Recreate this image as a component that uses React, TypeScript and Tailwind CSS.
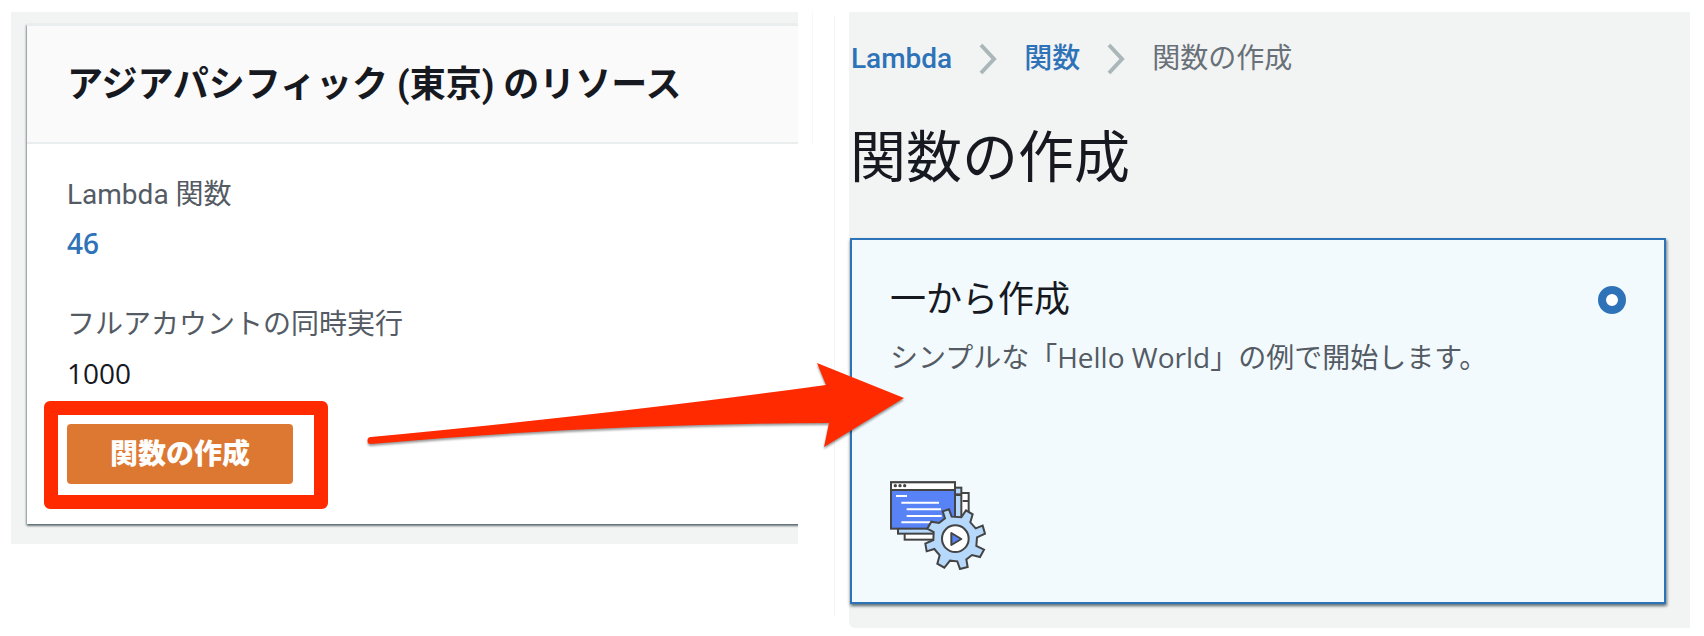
import { useState } from 'react'

const fields = [
  { label: 'Lambda 関数', value: '46', link: true },
  { label: 'フルアカウントの同時実行', value: '1000', link: false },
]

const crumbs = [
  { text: 'Lambda', link: true },
  { text: '関数', link: true },
  { text: '関数の作成', link: false },
]

const Chevron = () => (
  <svg viewBox="0 0 18 32" className="h-8 w-[18px] shrink-0" fill="none" stroke="#aab7b8" strokeWidth="4" aria-hidden="true">
    <path d="M2 2 L15 16 L2 30" />
  </svg>
)

const ScratchIcon = () => (
  <svg viewBox="60 64 291 267" className="h-[89px] w-[97px]" stroke="#444" strokeWidth="6" aria-hidden="true">
    {/* stacked windows */}
    <rect x="104" y="100" width="192" height="140" fill="#fff" />
    <path d="M278 124 H296" />
    <rect x="84" y="84" width="190" height="138" fill="#b5d8fb" />
    <path d="M258 105 H274" strokeWidth="8" />
    <rect x="63" y="68" width="192" height="139" fill="#5783f6" />
    <rect x="63" y="68" width="192" height="23" fill="#fff" />
    <g fill="#444" stroke="none">
      <circle cx="76" cy="78" r="5" />
      <circle cx="90" cy="78" r="5" />
      <circle cx="104" cy="78" r="5" />
    </g>
    <path d="M78 109 H111 M94 129 H207 M110 149 H213 M110 169 H215 M94 188 H190" stroke="#fff" strokeWidth="6" />
    {/* gear */}
    <path
      d="M218 155 L237 149 L245 171 L274 173 L288 152 L308 164 L301 188 L317 206 L338 198 L345 222 L321 233 L319 259 L342 270 L330 292 L306 286 L289 299 L293 322 L270 328 L262 305 L240 303 L223 324 L202 312 L209 287 L193 268 L170 275 L166 252 L190 241 L191 217 L172 207 L184 186 L207 190 L225 176 Z"
      fill="#b5d8fb"
    />
    <circle cx="256" cy="237" r="40" fill="#fff" />
    <path d="M244 220 V256 L274 238 Z" fill="#5783f6" strokeLinejoin="round" />
  </svg>
)

const Arrow = () => (
  <svg
    viewBox="0 0 544 92"
    className="pointer-events-none absolute top-[360px] left-[364px] h-[92px] w-[544px] drop-shadow-[0_2px_1px_rgba(0,0,0,0.4)]"
    aria-hidden="true"
  >
    <path
      d="M7 77 Q260 53 462 25 L453 3 L540 38 L460 87 L465 63 Q230 64 7 84 A3.5 3.5 0 0 1 7 77 Z"
      fill="#ff2a00"
    />
  </svg>
)

const ResourceCard = () => (
  <section className="overflow-hidden bg-[#f2f3f3] pt-3 pb-5 pl-4">
    <div className="-mr-4 border-t-2 border-[#eaeded] bg-white shadow-[0_2px_2px_rgba(0,28,36,0.5),-1px_1px_2px_rgba(0,28,36,0.3)]">
      <header className="border-b-2 border-[#eaeded] bg-[#fafafa] px-10 pt-[33px] pb-[31px]">
        <h2 className="text-4xl leading-[52px] font-bold whitespace-nowrap text-[#16191f]">アジアパシフィック (東京) のリソース</h2>
      </header>

      <div className="px-10 pt-[29px] pb-10">
        <dl className="flex flex-col gap-[38px]">
          {fields.map((field) => (
            <div key={field.label} className="flex flex-col gap-1">
              <dt className="text-[#545b64]">{field.label}</dt>
              <dd className="font-['Open_Sans'] font-medium text-[#16191f]">
                {field.link ? <a href="#functions" className="font-semibold text-[#2e73b8]">{field.value}</a> : field.value}
              </dd>
            </div>
          ))}
        </dl>

        <div className="relative mt-[29px] w-fit">
          <button className="block h-[60px] w-[226px] rounded bg-[#dd7833] pt-[2px] font-black text-white">関数の作成</button>
          <div className="pointer-events-none absolute -top-[23px] -right-[35px] -bottom-[25px] -left-[23px] rounded-md border-[14px] border-[#ff2a00]" />
        </div>
      </div>
    </div>
  </section>
)

const CreateFunction = () => {
  const [origin, setOrigin] = useState('scratch')

  return (
    <section className="rounded-bl-md bg-[#f2f3f3] pt-[25px] pr-6 pb-6">
      <nav aria-label="breadcrumb">
        <ol className="flex items-center gap-[27px] pl-[2px]">
          {crumbs.map((crumb, index) => (
            <li key={crumb.text} className="flex items-center gap-[27px] whitespace-nowrap">
              {index > 0 && <Chevron />}
              {crumb.link
                ? <a href="#lambda" className="font-medium text-[#2e73b8]">{crumb.text}</a>
                : <span className="text-[#687078]">{crumb.text}</span>}
            </li>
          ))}
        </ol>
      </nav>

      <h1 className="mt-[41px] pl-px text-[56px] leading-[72px] whitespace-nowrap text-[#16191f]">関数の作成</h1>

      <label className="mt-11 ml-px flex h-[366px] flex-col border-2 border-[#2e73b8] bg-[#f2fafd] px-[38px] pt-[34px] pb-8 shadow-[0_2px_3px_rgba(0,28,36,0.5),2px_2px_2px_rgba(0,28,36,0.2)]">
        <span className="flex items-center justify-between">
          <span className="text-4xl leading-[52px] text-[#16191f]">一から作成</span>
          <input
            type="radio"
            name="origin"
            value="scratch"
            checked={origin === 'scratch'}
            onChange={(e) => setOrigin(e.target.value)}
            className="size-7 appearance-none rounded-full border-8 border-[#2e73b8] bg-white"
          />
        </span>
        <span className="mt-[9px] text-[#545b64]">
          シンプルな「<span className="font-['Open_Sans'] font-medium">Hello World</span>」の例で開始します。
        </span>
        <span className="mt-auto">
          <ScratchIcon />
        </span>
      </label>
    </section>
  )
}

const App = () => {
  return (
    <main className="relative grid grid-cols-[787fr_51px_841fr] items-start bg-white pt-3 pr-[14px] pb-2 pl-[11px] font-['Roboto','Noto_Sans_CJK_JP',sans-serif] text-[28px] leading-[44px]">
      <ResourceCard />
      <div className="flex h-full gap-[21px] pl-[14px]" aria-hidden="true">
        <div className="h-[132px] w-px bg-[#f8f8f8]" />
        <div className="mt-1 mb-3 w-px bg-[#f2f3f3]" />
      </div>
      <CreateFunction />
      <Arrow />
    </main>
  )
}

export default App
